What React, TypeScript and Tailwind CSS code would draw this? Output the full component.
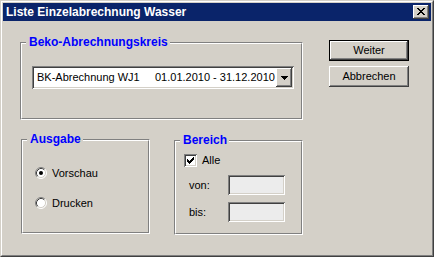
import type { ReactNode } from "react";

const raised =
  "shadow-[inset_-1px_-1px_#404040,inset_1px_1px_#ffffff,inset_-2px_-2px_#808080]";
const sunken =
  "shadow-[inset_1px_1px_#808080,inset_-1px_-1px_#ffffff,inset_2px_2px_#404040,inset_-2px_-2px_#d4d0c8]";

function Group({
  title,
  className,
  children,
}: {
  title: string;
  className: string;
  children: ReactNode;
}) {
  return (
    <div
      className={`relative border border-t-[#808080] border-l-[#808080] border-r-white border-b-white ${className}`}
    >
      <div className="h-full border border-t-white border-l-white border-r-[#808080] border-b-[#808080]">
        {children}
      </div>
      <span className="absolute -top-[8px] left-[5px] bg-[#d4d0c8] pl-[3px] pr-[2px] text-[12px] font-bold leading-[14px] text-[#0000ff]">
        {title}
      </span>
    </div>
  );
}

function Radio({ checked }: { checked?: boolean }) {
  return (
    <svg width="12" height="12" viewBox="0 0 12 12" className="shrink-0">
      <circle cx="6" cy="6" r="5" fill="#fff" />
      <path d="M2.11 9.89 A5.5 5.5 0 0 1 9.89 2.11" fill="none" stroke="#808080" />
      <path d="M9.89 2.11 A5.5 5.5 0 0 1 2.11 9.89" fill="none" stroke="#fff" />
      <path d="M2.82 9.18 A4.5 4.5 0 0 1 9.18 2.82" fill="none" stroke="#404040" />
      <path d="M9.18 2.82 A4.5 4.5 0 0 1 2.82 9.18" fill="none" stroke="#d4d0c8" />
      {checked && <circle cx="6" cy="6" r="2" fill="#000" />}
    </svg>
  );
}

function CheckBox() {
  return (
    <div className={`flex h-[13px] w-[13px] shrink-0 items-center justify-center bg-white ${sunken}`}>
      <svg width="7" height="7" viewBox="0 0 7 7" shapeRendering="crispEdges">
        <path
          d="M6 0h1v1H6z M5 1h2v1H5z M0 2h1v1H0z M4 2h3v1H4z M0 3h2v1H0z M3 3h3v1H3z M0 4h5v1H0z M1 5h3v1H1z M2 6h1v1H2z"
          fill="#000"
        />
      </svg>
    </div>
  );
}

function Button({ label, isDefault }: { label: string; isDefault?: boolean }) {
  return (
    <div className={`h-[21px] w-[80px] ${isDefault ? "border border-black" : ""}`}>
      <div
        className={`flex h-full w-full items-center justify-center bg-[#d4d0c8] text-[11px] text-black ${raised}`}
      >
        {label}
      </div>
    </div>
  );
}

export default function App() {
  return (
    <div
      className="h-[257px] w-[434px] border border-t-[#d4d0c8] border-l-[#d4d0c8] border-r-[#404040] border-b-[#404040] bg-[#d4d0c8] text-black"
      style={{ fontFamily: '"Liberation Sans", Arial, sans-serif' }}
    >
      <div className="flex h-full flex-col border border-t-white border-l-white border-r-[#808080] border-b-[#808080] p-px">
        {/* title bar */}
        <div className="flex h-[18px] shrink-0 items-center justify-between bg-[#0a246a] pl-[3px] pr-[2px]">
          <span className="text-[12px] font-bold leading-[18px] text-white">
            Liste Einzelabrechnung Wasser
          </span>
          <div className={`flex h-[14px] w-[16px] items-center justify-center bg-[#d4d0c8] ${raised}`}>
            <svg width="8" height="7" viewBox="0 0 8 7" shapeRendering="crispEdges" className="-mt-px">
              <path
                d="M0 0h2v1H0z M6 0h2v1H6z M1 1h2v1H1z M5 1h2v1H5z M2 2h4v1H2z M3 3h2v1H3z M2 4h4v1H2z M1 5h2v1H1z M5 5h2v1H5z M0 6h2v1H0z M6 6h2v1H6z"
                fill="#000"
              />
            </svg>
          </div>
        </div>

        {/* body */}
        <div className="flex flex-col pl-[17px] pt-[21px]">
          <div className="flex items-start">
            <Group title="Beko-Abrechnungskreis" className="h-[78px] w-[283px]">
              <div className="pl-[10px] pt-[22px]">
                <div className={`flex h-[23px] w-[262px] items-center bg-white p-[2px] ${sunken}`}>
                  <div className="flex flex-1 items-center pl-[3px] text-[11px] leading-none">
                    <span className="w-[118px]">BK-Abrechnung WJ1</span>
                    <span>01.01.2010 - 31.12.2010</span>
                  </div>
                  <div className={`flex h-[19px] w-[16px] items-center justify-center bg-[#d4d0c8] ${raised}`}>
                    <svg width="7" height="4" viewBox="0 0 7 4" shapeRendering="crispEdges">
                      <path d="M0 0h7v1H0z M1 1h5v1H1z M2 2h3v1H2z M3 3h1v1H3z" fill="#000" />
                    </svg>
                  </div>
                </div>
              </div>
            </Group>

            <div className="-mt-[2px] ml-[26px] flex flex-col gap-[5px]">
              <Button label="Weiter" isDefault />
              <Button label="Abbrechen" />
            </div>
          </div>

          <div className="mt-[19px] flex items-start">
            <Group title="Ausgabe" className="ml-px h-[95px] w-[129px]">
              <div className="flex flex-col gap-[18px] pl-[12px] pt-[26px] text-[11px]">
                <div className="flex h-[12px] items-center gap-[5px]">
                  <Radio checked />
                  <span>Vorschau</span>
                </div>
                <div className="flex h-[12px] items-center gap-[5px]">
                  <Radio />
                  <span>Drucken</span>
                </div>
              </div>
            </Group>

            <Group title="Bereich" className="ml-[24px] mt-px h-[95px] w-[129px]">
              <div className="flex flex-col pl-[8px] pt-[12px] text-[11px]">
                <div className="flex h-[13px] items-center gap-[5px]">
                  <CheckBox />
                  <span>Alle</span>
                </div>
                <div className="mt-[8px] flex items-center">
                  <span className="w-[44px] pl-[5px]">von:</span>
                  <div className={`h-[20px] w-[57px] bg-[#ececec] ${sunken}`} />
                </div>
                <div className="mt-[7px] flex items-center">
                  <span className="w-[44px] pl-[5px]">bis:</span>
                  <div className={`h-[20px] w-[57px] bg-[#ececec] ${sunken}`} />
                </div>
              </div>
            </Group>
          </div>
        </div>
      </div>
    </div>
  );
}
